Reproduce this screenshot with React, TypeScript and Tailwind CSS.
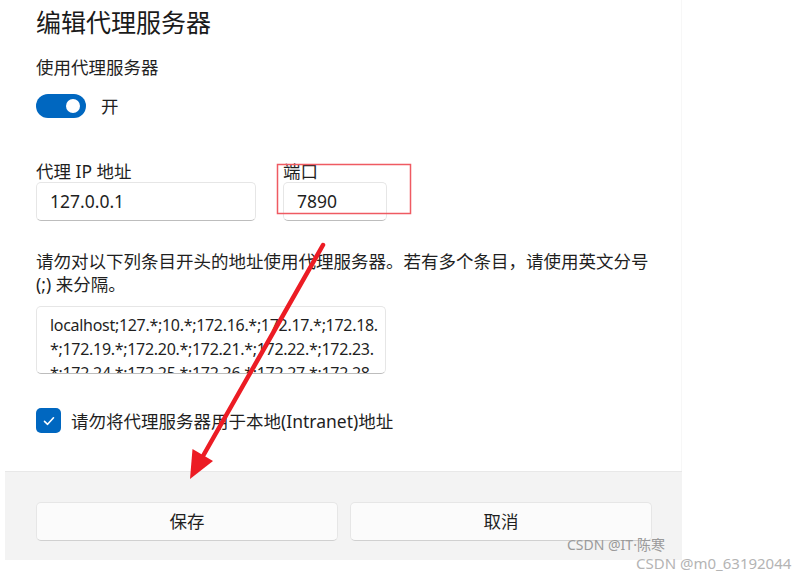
import React from 'react';

const FONT = { fontFamily: '"Noto Sans", "Noto Sans CJK SC", sans-serif' };

// Win11-style text box: flat white, faint border, darker bottom edge
const FIELD =
  'bg-white border border-[#e6e6e6] border-b-[#bdbdbd] rounded-[5px] text-[17.5px] text-[#1f1f1f]';

const BYPASS_LINES = [
  'localhost;127.*;10.*;172.16.*;172.17.*;172.18.',
  '*;172.19.*;172.20.*;172.21.*;172.22.*;172.23.',
  '*;172.24.*;172.25.*;172.26.*;172.27.*;172.28.',
];

const Toggle: React.FC = () => (
  <div className="w-[50px] h-[24px] rounded-full bg-[#0067c0] flex items-center justify-end pr-[6px]">
    <div className="w-[14px] h-[14px] rounded-full bg-white" />
  </div>
);

const Checkbox: React.FC = () => (
  <div className="w-[25px] h-[25px] rounded-[5px] bg-[#0067c0] flex items-center justify-center">
    <svg width="14" height="14" viewBox="0 0 14 14" fill="none">
      <path d="M2.5 7.4 L5.6 10.3 L11.5 3.8" stroke="#fff" strokeWidth="1.6" strokeLinecap="round" strokeLinejoin="round" />
    </svg>
  </div>
);

const Annotations: React.FC = () => (
  <svg className="absolute inset-0 pointer-events-none" width="800" height="576" viewBox="0 0 800 576">
    <rect x="277.5" y="164.5" width="133" height="49" fill="none" stroke="#ef5a62" strokeWidth="1.5" />
    <line x1="323" y1="245" x2="203" y2="456" stroke="#ec1c24" strokeWidth="4.5" strokeLinecap="round" />
    <polygon points="190,479 192.5,449 213,461" fill="#ec1c24" />
  </svg>
);

export default function App() {
  return (
    <div className="relative w-[800px] h-[576px] bg-white overflow-hidden text-[#1f1f1f]" style={FONT}>
      <div className="ml-[5px] w-[677px] flex flex-col">
        <div className="pl-[31px] h-[471px] flex flex-col border-r border-[#f7f7f7]">
          <h1 className="mt-[5px] text-[25px] leading-[34px] font-normal text-[#1a1a1a]">编辑代理服务器</h1>
          <div className="mt-[16px] text-[17.5px] leading-[24px]">使用代理服务器</div>
          <div className="mt-[15px] flex items-center gap-[15px]">
            <Toggle />
            <span className="text-[17.5px] leading-[24px]">开</span>
          </div>

          <div className="mt-[42px] flex gap-[27px]">
            <div className="flex flex-col">
              <span className="text-[17.5px] leading-[22px]">代理 IP 地址</span>
              <div className={`${FIELD} w-[220px] h-[39px] flex items-center pl-[13px]`}>127.0.0.1</div>
            </div>
            <div className="flex flex-col">
              <span className="text-[17.5px] leading-[22px]">端口</span>
              <div className={`${FIELD} w-[104px] h-[39px] flex items-center pl-[13px]`}>7890</div>
            </div>
          </div>

          <p className="mt-[29px] w-[625px] text-[17.5px] leading-[23px]">
            请勿对以下列条目开头的地址使用代理服务器。若有多个条目，请使用英文分号 (;) 来分隔。
          </p>
          <div className="mt-[10px] w-[350px] h-[68px] overflow-hidden bg-white border border-[#e6e6e6] border-b-[#bdbdbd] rounded-[5px] pl-[13px] pt-[6px] text-[16px] leading-[24px] tracking-[-0.3px] whitespace-nowrap text-[#1f1f1f]">
            {BYPASS_LINES.map((line) => (
              <div key={line}>{line}</div>
            ))}
          </div>

          <div className="mt-[34px] flex items-center gap-[10px]">
            <Checkbox />
            <span className="text-[17.5px] leading-[24px]">请勿将代理服务器用于本地(Intranet)地址</span>
          </div>
        </div>

        <div className="h-[89px] bg-[#f3f3f3] border-t border-[#e8e8e8] pl-[31px] pt-[30px] flex gap-[12px]">
          {['保存', '取消'].map((label) => (
            <button
              key={label}
              className="w-[302px] h-[39px] rounded-[5px] bg-[#fbfbfb] border border-[#e6e6e6] border-b-[#d0d0d0] text-[17.5px] text-[#1f1f1f]"
            >
              {label}
            </button>
          ))}
        </div>
      </div>

      <div className="absolute left-[567px] top-[536px] text-[14px] leading-[18px] text-[#9a9a9a]">CSDN @IT·陈寒</div>
      <div className="absolute left-[636px] top-[554px] text-[15px] leading-[19px] text-[#b4b4b4]">CSDN @m0_63192044</div>

      <Annotations />
    </div>
  );
}
